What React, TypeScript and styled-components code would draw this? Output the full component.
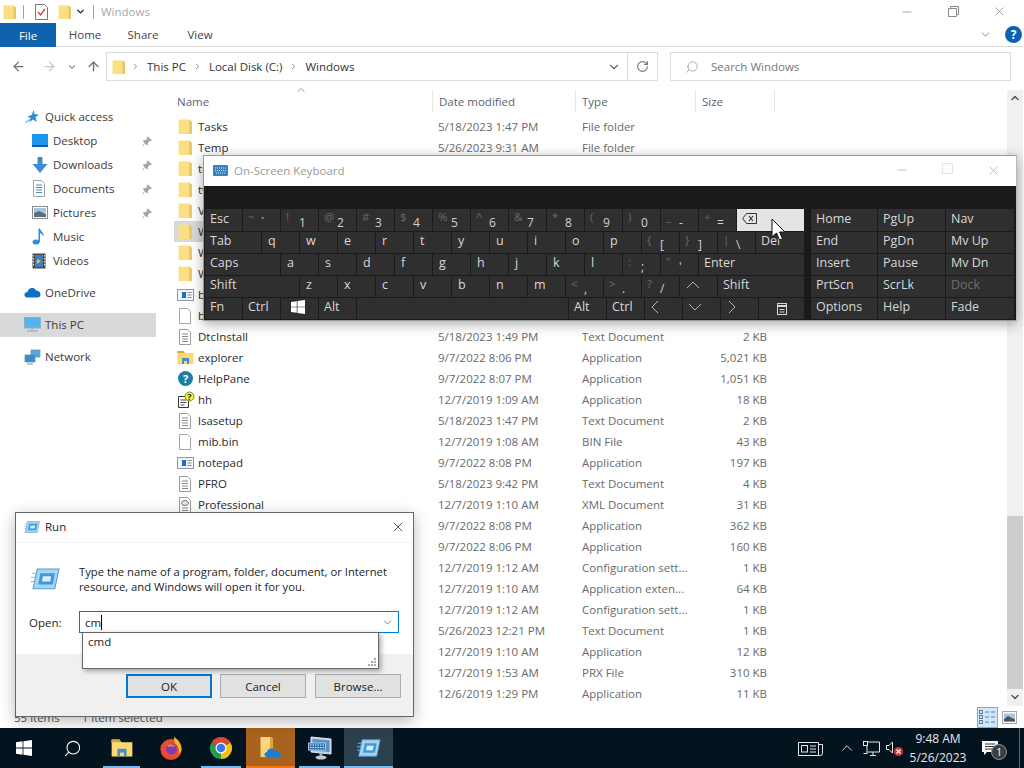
import { ReactNode } from 'react';
import styled, { createGlobalStyle } from 'styled-components';
import { ArrowLeft, ArrowRight, ArrowUp, ChevronDown, ChevronRight, ChevronUp, RotateCw, Search, X, Minus } from 'lucide-react';

const GlobalStyle = createGlobalStyle`
  html, body { margin: 0; padding: 0; background: #fff; overflow: hidden; }
  * { box-sizing: border-box; }
  body { font-family: "Open Sans", "Noto Sans", "Liberation Sans", sans-serif; font-size: 11.5px; color: #333; }
`;

const Desktop = styled.div`
  position: relative;
  width: 1024px;
  height: 768px;
  display: flex;
  flex-direction: column;
  overflow: hidden;
`;

/* ---------- explorer window ---------- */

const Explorer = styled.div`
  flex: 1;
  min-height: 0;
  display: flex;
  flex-direction: column;
  background: #fff;
`;

const TitleBar = styled.div`
  height: 23px;
  display: flex;
  align-items: center;
  padding-left: 2px;
  flex-shrink: 0;
`;

const QuickSep = styled.span<{ $l: number; $r: number }>`
  width: 1px;
  height: 14px;
  background: #a0a0a0;
  margin: 0 ${p => p.$r}px 0 ${p => p.$l}px;
`;

const QuickGap = styled.span`
  width: 9px;
`;

const QuickArrow = styled.span`
  display: flex;
  margin-left: 2px;
  color: #222;
`;

const TitleText = styled.span`
  color: #a8a8a8;
  font-size: 11.5px;
`;

const WinControls = styled.div`
  margin-left: auto;
  display: flex;
  align-items: center;
  padding-right: 2px;
  color: #777;
`;

const WinControl = styled.span<{ $w?: number }>`
  width: ${p => p.$w ?? 46}px;
  display: flex;
  justify-content: center;
`;

const Tabs = styled.div`
  height: 24px;
  display: flex;
  align-items: stretch;
  border-bottom: 1px solid #dadada;
  flex-shrink: 0;
`;

const FileTab = styled.div`
  width: 56px;
  background: #0f62ad;
  color: #fff;
  display: flex;
  align-items: center;
  justify-content: center;
  margin-bottom: -1px;
`;

const Tab = styled.div<{ $w: number }>`
  width: ${p => p.$w}px;
  display: flex;
  align-items: center;
  justify-content: center;
  color: #444;
`;

const HelpArea = styled.div`
  margin-left: auto;
  display: flex;
  align-items: center;
  gap: 13px;
  padding-right: 2px;
  color: #b5b5b5;
`;

const HelpBall = styled.span`
  width: 17px;
  height: 17px;
  border-radius: 50%;
  background: #0a62b0;
  color: #fff;
  font-weight: 700;
  font-size: 12px;
  display: flex;
  align-items: center;
  justify-content: center;
`;

const AddressRow = styled.div`
  height: 43px;
  display: flex;
  align-items: flex-start;
  flex-shrink: 0;
  padding: 5px 13px 0 0;
`;

const NavButtons = styled.div`
  width: 106px;
  height: 29px;
  display: flex;
  align-items: center;
  padding-left: 11px;
`;

const NavBtn = styled.span<{ $w: number; $dim?: boolean }>`
  width: ${p => p.$w}px;
  display: flex;
  color: ${p => (p.$dim ? '#c8c8c8' : '#707070')};
`;

const AddressBox = styled.div`
  width: 552px;
  height: 29px;
  border: 1px solid #dcdcdc;
  display: flex;
  align-items: center;
  padding-left: 4px;
  font-size: 11.5px;
  color: #333;
`;

const Crumb = styled.span`
  margin-left: 7px;
  white-space: nowrap;
`;

const CrumbChevron = styled.span<{ $m?: number }>`
  margin-left: ${p => p.$m ?? 7}px;
  color: #888;
  display: flex;
`;

const AddressEnd = styled.div`
  margin-left: auto;
  display: flex;
  align-items: center;
  height: 100%;
  color: #666;
`;

const RefreshCell = styled.span`
  width: 30px;
  height: 100%;
  border-left: 1px solid #dcdcdc;
  margin-left: 6px;
  display: flex;
  align-items: center;
  justify-content: center;
  color: #777;
`;

const SearchBox = styled.div`
  margin-left: 12px;
  flex: 1;
  height: 29px;
  border: 1px solid #dcdcdc;
  display: flex;
  align-items: center;
  padding-left: 14px;
  gap: 12px;
  color: #777;
  font-size: 11.5px;
`;

const Mirror = styled.span`
  display: flex;
  transform: scaleX(-1);
`;

const Body = styled.div`
  flex: 1;
  min-height: 0;
  display: flex;
`;

const Nav = styled.div`
  width: 156px;
  flex-shrink: 0;
  padding-top: 15px;
  display: flex;
  flex-direction: column;
`;

const NavRow = styled.div<{ $indent: number; $selected?: boolean; $gap?: number }>`
  height: 24px;
  display: flex;
  align-items: center;
  padding: 0 3px 1px ${p => p.$indent}px;
  margin-top: ${p => p.$gap ?? 0}px;
  background: ${p => (p.$selected ? '#d9d9d9' : 'transparent')};
  color: #3a3a3a;
  font-size: 11.5px;
`;

const NavIcon = styled.span`
  width: 21px;
  display: flex;
  flex-shrink: 0;
`;

const NavPin = styled.span`
  margin-left: auto;
  display: flex;
`;

const ListArea = styled.div`
  flex: 1;
  min-width: 0;
  padding-left: 18px;
`;

const HeaderRow = styled.div`
  height: 22px;
  display: flex;
  margin-bottom: 4px;
  position: relative;
`;

const HeaderCell = styled.div<{ $w: number; $first?: boolean }>`
  width: ${p => p.$w}px;
  padding-left: ${p => (p.$first ? 3 : 6)}px;
  border-left: ${p => (p.$first ? 'none' : '1px solid #e5e5e5')};
  display: flex;
  align-items: center;
  color: #5a6470;
  font-size: 11.5px;
  &:last-child {
    border-right: 1px solid #e5e5e5;
  }
`;

const SortCaret = styled.span`
  position: absolute;
  left: 121px;
  top: -6px;
  display: flex;
  color: #777;
`;

const FileRow = styled.div<{ $selected?: boolean }>`
  height: 21px;
  width: 601px;
  display: grid;
  grid-template-columns: 264px 144px 113px 72px;
  align-items: center;
  background: ${p => (p.$selected ? '#d9d9d9' : 'transparent')};
  color: #6a6a6a;
  font-size: 11.5px;
  white-space: nowrap;
`;

const NameCell = styled.div`
  display: flex;
  align-items: center;
  padding-left: 3px;
  color: #2b2b2b;
`;

const NameIcon = styled.span`
  width: 21px;
  height: 18px;
  display: flex;
  align-items: center;
  flex-shrink: 0;
`;

const SizeCell = styled.div`
  text-align: right;
`;

const Scrollbar = styled.div`
  width: 16px;
  margin-right: 1px;
  background: #f0f0f0;
  display: flex;
  flex-direction: column;
  flex-shrink: 0;
`;

const ScrollArrow = styled.div`
  height: 16px;
  display: flex;
  align-items: center;
  justify-content: center;
  color: #555;
`;

const ScrollSpace = styled.div`
  height: 410px;
`;

const ScrollThumb = styled.div`
  height: 173px;
  background: #cdcdcd;
`;

const StatusBar = styled.div`
  height: 22px;
  display: flex;
  align-items: center;
  flex-shrink: 0;
  padding-left: 14px;
  color: #555;
`;

const StatusGap = styled.span`
  margin-left: 22px;
`;

const ViewIcons = styled.div`
  margin-left: auto;
  display: flex;
  align-items: center;
  padding-right: 7px;
  gap: 4px;
`;

const ViewBtn = styled.span<{ $active?: boolean; $w: number }>`
  width: ${p => p.$w}px;
  height: 21px;
  display: flex;
  align-items: center;
  justify-content: center;
  background: ${p => (p.$active ? '#cce8ff' : 'transparent')};
  border: ${p => (p.$active ? '1px solid #6bb6e0' : 'none')};
`;

/* ---------- on-screen keyboard ---------- */

const OskWindow = styled.div`
  position: absolute;
  left: 203px;
  top: 155px;
  width: 814px;
  height: 166px;
  border: 1px solid #9a9a9a;
  border-right-color: #bbb;
  background: #1a1a1a;
  box-shadow: 0 3px 12px rgba(0, 0, 0, 0.35);
  display: flex;
  flex-direction: column;
`;

const OskTitle = styled.div`
  height: 30px;
  background: #fff;
  display: flex;
  align-items: center;
  padding: 0 0 1px 9px;
  gap: 6px;
  font-size: 11.5px;
  color: #9a9a9a;
  flex-shrink: 0;
`;

const OskControls = styled.div`
  margin-left: auto;
  display: flex;
  color: #9a9a9a;
`;

const OskDisplay = styled.div`
  height: 23px;
  background: #1a1a1a;
  flex-shrink: 0;
`;

const KeyArea = styled.div`
  display: flex;
  padding-left: 1px;
`;

const MainKeys = styled.div`
  width: 606px;
  display: flex;
  flex-direction: column;
  gap: 1px;
`;

const NavKeys = styled.div`
  flex: 1;
  display: flex;
  flex-direction: column;
  gap: 1px;
`;

const KeyRow = styled.div`
  height: 21px;
  display: flex;
  gap: 1px;
  &:first-child {
    height: 22px;
  }
`;

const Key = styled.div<{ $w: number; $hot?: boolean; $dim?: boolean; $center?: boolean; $pad?: number }>`
  width: ${p => p.$w - 1}px;
  flex-shrink: 0;
  background: ${p => (p.$hot ? '#e4e4e4' : '#2f2f2f')};
  color: ${p => (p.$dim ? '#6e6e6e' : '#d8d8d8')};
  font-size: 12.5px;
  display: flex;
  align-items: center;
  justify-content: ${p => (p.$center ? 'center' : 'flex-start')};
  padding: ${p => (p.$center ? '0' : `0 0 4px ${p.$pad ?? 5}px`)};
  white-space: nowrap;
  overflow: hidden;
`;

const LetterLabel = styled.span`
  margin-left: 1px;
  font-size: 12.5px;
`;

const SymLabel = styled.span`
  align-self: flex-start;
  color: #6a6a6a;
  font-size: 11.5px;
  line-height: 15px;
  width: 11px;
  flex-shrink: 0;
`;

const DigitLabel = styled.span`
  align-self: flex-end;
  margin-left: 2px;
  margin-bottom: -3px;
  font-size: 12px;
  line-height: 15px;
  color: #cfcfcf;
`;

const PointerArrow = styled.svg`
  position: absolute;
  left: 771px;
  top: 218px;
`;

/* ---------- run dialog ---------- */

const RunWindow = styled.div`
  position: absolute;
  left: 15px;
  top: 512px;
  width: 399px;
  height: 205px;
  background: #fff;
  border: 1px solid #666;
  box-shadow: 0 4px 14px rgba(0, 0, 0, 0.28);
  display: flex;
  flex-direction: column;
  color: #222;
  font-size: 11.5px;
`;

const RunTitle = styled.div`
  height: 30px;
  display: flex;
  align-items: center;
  padding: 0 0 2px 8px;
  gap: 5px;
  border-bottom: 1px solid #f2f2f2;
  flex-shrink: 0;
`;

const RunClose = styled.span`
  margin-left: auto;
  padding-right: 7px;
  display: flex;
  color: #333;
`;

const RunBody = styled.div`
  flex: 1;
  position: relative;
  display: flex;
  flex-direction: column;
  padding: 21px 14px 0 13px;
`;

const RunMessage = styled.div`
  display: flex;
  align-items: center;
  gap: 19px;
  padding-left: 2px;
`;

const RunText = styled.div`
  line-height: 15px;
  white-space: nowrap;
  font-size: 11.25px;
`;

const OpenRow = styled.div`
  display: flex;
  align-items: center;
  margin-top: 17px;
`;

const OpenLabel = styled.span`
  width: 50px;
`;

const Combo = styled.div`
  width: 320px;
  height: 22px;
  border: 1px solid #0078d7;
  display: flex;
  align-items: center;
  padding-left: 5px;
  margin-right: -1px;
`;

const Caret = styled.span`
  width: 1px;
  height: 15px;
  background: #000;
`;

const ComboArrow = styled.span`
  margin-left: auto;
  padding-right: 1px;
  display: flex;
  color: #555;
  width: 20px;
  justify-content: center;
`;

const Suggest = styled.div`
  position: absolute;
  left: 66px;
  top: 89px;
  width: 297px;
  height: 37px;
  background: #fff;
  border: 1px solid #666;
  box-shadow: 2px 2px 5px rgba(0, 0, 0, 0.35);
  padding: 1px 0 0 5px;
  z-index: 2;
`;

const Grip = styled.svg`
  position: absolute;
  right: 1px;
  bottom: 1px;
`;

const RunFooter = styled.div`
  height: 62px;
  background: #f0f0f0;
  display: flex;
  align-items: flex-start;
  padding: 20px 0 0 110px;
  flex-shrink: 0;
`;

const DialogButton = styled.div<{ $primary?: boolean; $w: number; $gap?: number }>`
  width: ${p => p.$w}px;
  height: 24px;
  margin-right: ${p => p.$gap ?? 0}px;
  background: #e1e1e1;
  border: ${p => (p.$primary ? '2px solid #0078d7' : '1px solid #adadad')};
  display: flex;
  align-items: center;
  justify-content: center;
`;

/* ---------- taskbar ---------- */

const Taskbar = styled.div`
  height: 40px;
  background: #04141f;
  display: flex;
  align-items: stretch;
  flex-shrink: 0;
`;

const TaskBtn = styled.div<{ $w?: number; $bg?: string; $line?: string; $lineInset?: number }>`
  position: relative;
  width: ${p => p.$w ?? 49}px;
  display: flex;
  align-items: center;
  justify-content: center;
  background: ${p => p.$bg ?? 'transparent'};
  &::after {
    content: '';
    display: ${p => (p.$line ? 'block' : 'none')};
    position: absolute;
    left: ${p => p.$lineInset ?? 0}px;
    right: ${p => p.$lineInset ?? 0}px;
    bottom: 0;
    height: 2px;
    background: ${p => p.$line};
  }
`;

const Tray = styled.div`
  margin-left: auto;
  display: flex;
  align-items: stretch;
  color: #fff;
`;

const TraySlot = styled.div<{ $w: number; $gap?: number }>`
  position: relative;
  width: ${p => p.$w}px;
  margin-left: ${p => p.$gap ?? 0}px;
  display: flex;
  align-items: center;
  justify-content: center;
`;

const Clock = styled.div`
  display: flex;
  flex-direction: column;
  align-items: center;
  color: #e8e8e8;
  font-size: 12px;
  line-height: 19px;
  white-space: nowrap;
`;

const NotifBadge = styled.span`
  position: absolute;
  left: 22px;
  top: 16px;
  width: 16px;
  height: 16px;
  border-radius: 50%;
  background: #3a3f44;
  border: 1px solid #8a8f94;
  color: #fff;
  font-size: 10px;
  display: flex;
  align-items: center;
  justify-content: center;
`;

const DesktopPeek = styled.div`
  width: 13px;
  display: flex;
  justify-content: flex-end;
  padding-right: 4px;
`;

const PeekLine = styled.span`
  width: 1px;
  background: #5a6670;
`;

/* ---------- drawings ---------- */

function Folder({ size = 16 }: { size?: number }) {
  return (
    <svg width={size} height={size} viewBox="0 0 16 16">
      <path d="M1.500 1.500h10l2.500 2v11.500h-12.500z" fill="#fcdf85" />
      <path d="M11.500 1.500l2.500 2v11.500h-2.500z" fill="#e9c566" />
    </svg>
  );
}

function TextDoc() {
  return (
    <svg width="16" height="18" viewBox="0 0 16 18">
      <path d="M2.500 1.500h8l3 3v12h-11z" fill="#fff" stroke="#9a9a9a" />
      <path d="M5 6h6M5 8.500h6M5 11h6M5 13.500h6" stroke="#8a8a8a" />
    </svg>
  );
}

function BlankDoc() {
  return (
    <svg width="16" height="18" viewBox="0 0 16 18">
      <path d="M2.500 1.500h8l3 3v12h-11z" fill="#fff" stroke="#a5a5a5" />
    </svg>
  );
}

function NotepadApp() {
  return (
    <svg width="17" height="14" viewBox="0 0 17 14">
      <rect x="0.500" y="1.500" width="16" height="11" fill="#f4f8fc" stroke="#8a9aaa" />
      <rect x="5" y="4" width="4" height="6" fill="#1f6fc0" />
      <path d="M10.500 4.500h4M10.500 7h4M10.500 9.500h4" stroke="#7a8a9a" />
    </svg>
  );
}

function ExplorerIcon({ size = 17 }: { size?: number }) {
  return (
    <svg width={size} height={size} viewBox="0 0 17 17">
      <path d="M0.500 2h6l1.500 2h8.500v11h-16z" fill="#fcd874" />
      <path d="M0.500 2h6l1 2h-7.500z" fill="#d9a531" />
      <path d="M5 9h7v6h-2v-3h-3v3h-2z" fill="#4a8cc4" />
    </svg>
  );
}

function HelpIcon() {
  return (
    <svg width="17" height="17" viewBox="0 0 17 17">
      <circle cx="8.500" cy="8.500" r="7.500" fill="#1b7f9f" />
      <text x="8.500" y="12.500" textAnchor="middle" fontSize="11" fontWeight="700" fill="#fff" fontFamily="Open Sans, sans-serif">?</text>
    </svg>
  );
}

function HhIcon() {
  return (
    <svg width="19" height="18" viewBox="0 0 19 18">
      <path d="M1.500 5.500h10v11h-10z" fill="#fff" stroke="#333" />
      <path d="M3.500 9h6M3.500 11.500h6M3.500 14h4" stroke="#444" />
      <circle cx="12.500" cy="5.500" r="4.500" fill="#f4ee3c" stroke="#8a8a20" />
      <text x="12.500" y="9" textAnchor="middle" fontSize="9" fontWeight="700" fill="#333" fontFamily="Open Sans, sans-serif">?</text>
    </svg>
  );
}

function XmlDoc() {
  return (
    <svg width="16" height="18" viewBox="0 0 16 18">
      <path d="M2.500 1.500h8l3 3v12h-11z" fill="#fff" stroke="#9a9a9a" />
      <ellipse cx="8" cy="7" rx="3.500" ry="2.500" fill="#e8e8e8" stroke="#777" />
      <path d="M5 12h6M5 14.500h6" stroke="#8a8a8a" />
    </svg>
  );
}

function RowIcon({ kind }: { kind: string }) {
  if (kind === 'folder') return <Folder size={17} />;
  if (kind === 'text') return <TextDoc />;
  if (kind === 'blank') return <BlankDoc />;
  if (kind === 'note') return <NotepadApp />;
  if (kind === 'explorer') return <ExplorerIcon />;
  if (kind === 'help') return <HelpIcon />;
  if (kind === 'hh') return <HhIcon />;
  if (kind === 'xml') return <XmlDoc />;
  return null;
}

function PinIcon() {
  return (
    <svg width="12" height="12" viewBox="0 0 12 12">
      <path d="M6.500 1l4.500 4.500-1.200.6-.8-.3-2 2 .2 1.700-1 1-2-2-3 3-.4-.4 3-3-2-2 1-1 1.700.2 2-2-.3-.8z" fill="#a0a4a8" />
    </svg>
  );
}

function StarIcon() {
  return (
    <svg width="16" height="16" viewBox="0 0 16 16">
      <path d="M9.500 1l1.200 4.300 4.300.3-3.500 2.700 1.200 4.700-3.800-2.600-3.800 3 1.400-4.600-3.200-1 4.600-2z" fill="#2b8fd8" />
      <path d="M1 13l4-3 1 1-4 3.500z" fill="#8fc4ea" />
    </svg>
  );
}

function DesktopIcon() {
  return (
    <svg width="16" height="13" viewBox="0 0 16 13">
      <rect x="0" y="0" width="16" height="13" fill="#1a98ee" />
      <rect x="0" y="11" width="16" height="2" fill="#0b5fa8" />
    </svg>
  );
}

function DownloadsIcon() {
  return (
    <svg width="16" height="16" viewBox="0 0 16 16">
      <path d="M5.500 0h5v7h5L8 16 0.500 7h5z" fill="#3d8bd0" />
    </svg>
  );
}

function DocumentsIcon() {
  return (
    <svg width="14" height="17" viewBox="0 0 14 17">
      <path d="M1.500 0.500h8l3 3v13h-11z" fill="#fff" stroke="#9aa5ae" />
      <path d="M4 5h6M4 7.500h6M4 10h6M4 12.500h6" stroke="#4f8cb8" />
    </svg>
  );
}

function PicturesIcon() {
  return (
    <svg width="16" height="13" viewBox="0 0 16 13">
      <rect x="0.500" y="0.500" width="15" height="12" fill="#fff" stroke="#8a8a8a" />
      <rect x="2" y="2" width="12" height="5" fill="#a9c4dc" />
      <path d="M2 7l5-2 7 3v3h-12z" fill="#5a6f80" />
    </svg>
  );
}

function MusicIcon() {
  return (
    <svg width="14" height="17" viewBox="0 0 14 17">
      <ellipse cx="4" cy="14" rx="3.500" ry="2.500" fill="#2b8fd8" />
      <path d="M6.500 14V0.500h1.500c.5 3 4.500 4 3.500 8-.5-2-2.500-3-3.500-3.500V14z" fill="#2b8fd8" />
    </svg>
  );
}

function VideosIcon() {
  return (
    <svg width="14" height="16" viewBox="0 0 14 16">
      <rect x="0.500" y="0.500" width="13" height="15" fill="#4a4a4a" />
      <rect x="3" y="2" width="8" height="12" fill="#3d7fb8" />
      <path d="M5 6l4 2-4 3z" fill="#e8c24a" />
      <path d="M1.500 2v12M12.500 2v12" stroke="#ddd" strokeDasharray="1.500 1.500" />
    </svg>
  );
}

function OneDriveIcon() {
  return (
    <svg width="17" height="11" viewBox="0 0 17 11">
      <path d="M3.500 10.500C1 10.500 0 8.500 0.500 7 1 5.500 2.500 5 3.500 5 4 2 6.500 0.500 9 1c1.500.3 2.500 1.300 3 2.500 2.500 0 4.500 1.500 4.500 4 0 1.800-1.300 3-3 3z" fill="#0f6fc6" />
    </svg>
  );
}

function MonitorIcon() {
  return (
    <svg width="17" height="16" viewBox="0 0 17 16">
      <rect x="0.500" y="0.500" width="16" height="10.500" fill="#52b4ec" stroke="#8ab2cc" />
      <path d="M8 11v2.500M3 14h11" stroke="#a5b5c0" strokeWidth="1.500" />
    </svg>
  );
}

function NetworkIcon() {
  return (
    <svg width="17" height="16" viewBox="0 0 17 16">
      <rect x="7" y="1" width="9" height="7" fill="#52a8e0" stroke="#6a8aa0" strokeWidth="0.700" />
      <rect x="1" y="6" width="10" height="7" fill="#3a8fd0" stroke="#6a8aa0" strokeWidth="0.700" />
      <path d="M3 15h6" stroke="#7a8a9a" />
    </svg>
  );
}

function WinLogo({ size = 16, color = '#fff' }: { size?: number; color?: string }) {
  return (
    <svg width={size} height={size} viewBox="0 0 16 16">
      <path d="M0 2.200l6.600-.9v6.300H0zM7.400 1.200L16 0v7.600H7.400zM0 8.400h6.600v6.300L0 13.800zM7.400 8.400H16V16l-8.600-1.200z" fill={color} />
    </svg>
  );
}

function RunIcon({ size = 18 }: { size?: number }) {
  return (
    <svg width={size} height={size * 0.75} viewBox="0 0 28 21">
      <path d="M6 1h21l-4 19H2z" fill="#a8d4f0" stroke="#4f9fd8" />
      <path d="M9 5h14l-2 11H7z" fill="#3f9ad8" />
      <path d="M11.500 8h8l-1 5h-8z" fill="#d8eefa" />
      <path d="M1 5h4M0 9h4M0 13h3" stroke="#7fbde6" />
    </svg>
  );
}

function KeyboardMini() {
  return (
    <svg width="15" height="11" viewBox="0 0 15 11">
      <rect width="15" height="11" rx="1" fill="#3a7fc0" />
      <path d="M2 3h11M2 5.500h11M3 8h9" stroke="#cfe6f7" strokeDasharray="1 1" />
    </svg>
  );
}

function FirefoxIcon() {
  return (
    <svg width="24" height="24" viewBox="0 0 24 24">
      <circle cx="12" cy="13.500" r="10.500" fill="#e8502a" />
      <path d="M15 1c5 3 8 8 7.500 13-.5 2-1.500 3-3 4 1-4 0-8-3-10-1-3-2-5-1.500-7z" fill="#fbb323" />
      <path d="M2 9c-1.500 5 1 12 9 13.500 4 .5 7-1 8-3-5 2-12 0-13-5-.5-2 0-4 1-5z" fill="#f0433c" />
      <circle cx="12.500" cy="13" r="5.500" fill="#7a3fb0" />
      <path d="M8 9c3-1.500 7-1 8.500 2-2-1-5-1-7 0z" fill="#f78a2a" />
    </svg>
  );
}

function ChromeIcon() {
  return (
    <svg width="24" height="24" viewBox="0 0 24 24">
      <path d="M12 12L2.470 6.500A11 11 0 0 1 21.530 6.500z" fill="#dd4535" />
      <path d="M12 12l9.530-5.500A11 11 0 0 1 12 23z" fill="#f4c20d" />
      <path d="M12 12v11A11 11 0 0 1 2.470 6.500z" fill="#1f9d55" />
      <circle cx="12" cy="12" r="5.500" fill="#fff" />
      <circle cx="12" cy="12" r="4.300" fill="#3b78e7" />
    </svg>
  );
}

function OneDriveFolderIcon() {
  return (
    <svg width="22" height="24" viewBox="0 0 22 24">
      <path d="M0.500 1h11l1.500 2v18H0.500z" fill="#f7d57e" />
      <path d="M10 1h1.500l1.500 2v18h-3z" fill="#d9a93f" />
      <path d="M7.500 21c-2 0-3-1.200-3-2.500S5.500 16 7 16c.5-2.500 2.500-4 5-3.500 1.500.3 2.500 1.200 3 2.500 3-.5 6 1.500 6 6z" fill="#1b7fd0" />
    </svg>
  );
}

function OskTaskIcon() {
  return (
    <svg width="24" height="24" viewBox="0 0 24 24">
      <path d="M3 1l20 2v15L3 16z" fill="#b8cfe6" stroke="#dce8f2" />
      <path d="M4.500 3l17 1.500v11.500l-17-1.500z" fill="#5f8fc0" />
      <rect x="0.500" y="7" width="17" height="7" fill="#2f6fae" stroke="#c9ddee" strokeWidth="0.800" />
      <path d="M2 9h14M2 11.500h14" stroke="#e4eef7" strokeDasharray="1.500 1" />
      <ellipse cx="13" cy="21.500" rx="5.500" ry="2" fill="#c8c8c8" />
      <rect x="11.500" y="17" width="3" height="3" fill="#aaa" />
    </svg>
  );
}

function NewsIcon() {
  return (
    <svg width="25" height="16" viewBox="0 0 25 16" fill="none" stroke="#e8e8e8">
      <path d="M0.500 2.500h20v13h-20zM20.500 4.500h4v9a2 2 0 0 1-2 2h-2" />
      <rect x="3.500" y="5.500" width="6" height="6.500" />
      <path d="M12 6h6M12 9h6M12 12h6" />
    </svg>
  );
}

function NetTrayIcon() {
  return (
    <svg width="17" height="15" viewBox="0 0 17 15" fill="none" stroke="#e8e8e8">
      <path d="M4.500 1h12v10h-12M10 11v3M7 14.500h6M4 5v7" />
      <rect x="0.500" y="0.500" width="4" height="4" />
      <path d="M0.500 12.500h4" />
    </svg>
  );
}

function SoundIcon() {
  return (
    <svg width="18" height="18" viewBox="0 0 18 18">
      <path d="M0.500 6.500h2.500l3.500-3.500v11l-3.500-3.500h-2.500z" fill="none" stroke="#e8e8e8" />
      <circle cx="12.500" cy="12.500" r="4.500" fill="#d13438" />
      <path d="M10.500 10.500l4 4M14.500 10.500l-4 4" stroke="#fff" strokeWidth="1.200" />
    </svg>
  );
}

function NotifIcon() {
  return (
    <svg width="16" height="15" viewBox="0 0 16 15">
      <path d="M0 0h16v11H5l-3 3v-3H0z" fill="#fff" />
      <path d="M3 3h10M3 5.500h10M3 8h7" stroke="#333" />
    </svg>
  );
}

function DetailsViewIcon() {
  return (
    <svg width="17" height="15" viewBox="0 0 17 15" fill="none" stroke="#6e7a86">
      <rect x="0.500" y="0.500" width="3" height="3" />
      <rect x="0.500" y="5.500" width="3" height="3" />
      <rect x="0.500" y="10.500" width="3" height="3" />
      <path d="M6 2h4M12 2h4M6 7h4M12 7h4M6 12h4M12 12h4" />
    </svg>
  );
}

function LargeViewIcon() {
  return (
    <svg width="15" height="13" viewBox="0 0 15 13">
      <rect x="0.500" y="0.500" width="14" height="12" fill="#fff" stroke="#a8a8a8" />
      <rect x="2" y="2.500" width="11" height="8" fill="#a9c4dc" />
      <path d="M2 8l4-3 7 3.500v2h-11z" fill="#40566a" />
    </svg>
  );
}

function PropertiesIcon() {
  return (
    <svg width="13" height="16" viewBox="0 0 13 16">
      <path d="M0.500 0.500h9l3 3v12h-12z" fill="#fff" stroke="#777" />
      <path d="M3 8l2.500 3L10 5" fill="none" stroke="#d83a3a" strokeWidth="1.300" />
    </svg>
  );
}

function BackspaceGlyph() {
  return (
    <svg width="15" height="11" viewBox="0 0 15 11" fill="none" stroke="#333">
      <path d="M4.500 0.500h10v10h-10L0.700 5.500z" />
      <path d="M7 3l4 5M11 3l-4 5" strokeWidth="1.200" />
    </svg>
  );
}

function ArrowGlyph({ d, w, h }: { d: string; w: number; h: number }) {
  return (
    <svg width={w} height={h} viewBox={`0 0 ${w} ${h}`} fill="none" stroke="#b5b5b5">
      <path d={d} />
    </svg>
  );
}

function MenuGlyph() {
  return (
    <svg width="10" height="12" viewBox="0 0 10 12" fill="none" stroke="#d8d8d8">
      <rect x="0.500" y="0.500" width="9" height="11" />
      <path d="M0.500 3h9" strokeWidth="2" />
      <path d="M2.500 6.500h5M2.500 9h5" />
    </svg>
  );
}

/* ---------- data ---------- */

type FileEntry = { name: string; icon: string; date: string; type: string; size: string; selected?: boolean };

const files: FileEntry[] = [
  { name: 'Tasks', icon: 'folder', date: '5/18/2023 1:47 PM', type: 'File folder', size: '' },
  { name: 'Temp', icon: 'folder', date: '5/26/2023 9:31 AM', type: 'File folder', size: '' },
  { name: 'tracing', icon: 'folder', date: '12/7/2019 1:14 AM', type: 'File folder', size: '' },
  { name: 'twain_32', icon: 'folder', date: '12/7/2019 1:31 AM', type: 'File folder', size: '' },
  { name: 'Vss', icon: 'folder', date: '12/7/2019 1:14 AM', type: 'File folder', size: '' },
  { name: 'WaaS', icon: 'folder', date: '12/7/2019 1:14 AM', type: 'File folder', size: '', selected: true },
  { name: 'Web', icon: 'folder', date: '12/7/2019 1:31 AM', type: 'File folder', size: '' },
  { name: 'WinSxS', icon: 'folder', date: '5/18/2023 1:50 PM', type: 'File folder', size: '' },
  { name: 'bfsvc', icon: 'note', date: '12/7/2019 1:09 AM', type: 'Application', size: '78 KB' },
  { name: 'bootstat.dat', icon: 'blank', date: '5/26/2023 9:30 AM', type: 'DAT File', size: '66 KB' },
  { name: 'DtcInstall', icon: 'text', date: '5/18/2023 1:49 PM', type: 'Text Document', size: '2 KB' },
  { name: 'explorer', icon: 'explorer', date: '9/7/2022 8:06 PM', type: 'Application', size: '5,021 KB' },
  { name: 'HelpPane', icon: 'help', date: '9/7/2022 8:07 PM', type: 'Application', size: '1,051 KB' },
  { name: 'hh', icon: 'hh', date: '12/7/2019 1:09 AM', type: 'Application', size: '18 KB' },
  { name: 'lsasetup', icon: 'text', date: '5/18/2023 1:47 PM', type: 'Text Document', size: '2 KB' },
  { name: 'mib.bin', icon: 'blank', date: '12/7/2019 1:08 AM', type: 'BIN File', size: '43 KB' },
  { name: 'notepad', icon: 'note', date: '9/7/2022 8:08 PM', type: 'Application', size: '197 KB' },
  { name: 'PFRO', icon: 'text', date: '5/18/2023 9:42 PM', type: 'Text Document', size: '4 KB' },
  { name: 'Professional', icon: 'xml', date: '12/7/2019 1:10 AM', type: 'XML Document', size: '31 KB' },
  { name: 'regedit', icon: 'note', date: '9/7/2022 8:08 PM', type: 'Application', size: '362 KB' },
  { name: 'splwow64', icon: 'note', date: '9/7/2022 8:06 PM', type: 'Application', size: '160 KB' },
  { name: 'system', icon: 'text', date: '12/7/2019 1:12 AM', type: 'Configuration sett...', size: '1 KB' },
  { name: 'twain_32.dll', icon: 'blank', date: '12/7/2019 1:10 AM', type: 'Application exten...', size: '64 KB' },
  { name: 'win', icon: 'text', date: '12/7/2019 1:12 AM', type: 'Configuration sett...', size: '1 KB' },
  { name: 'WindowsUpdate', icon: 'text', date: '5/26/2023 12:21 PM', type: 'Text Document', size: '1 KB' },
  { name: 'winhlp32', icon: 'note', date: '12/7/2019 1:10 AM', type: 'Application', size: '12 KB' },
  { name: 'WMSysPr9.prx', icon: 'blank', date: '12/7/2019 1:53 AM', type: 'PRX File', size: '310 KB' },
  { name: 'write', icon: 'note', date: '12/6/2019 1:29 PM', type: 'Application', size: '11 KB' },
];

type KeySpec = { w: number; label?: string; sym?: string; digit?: string; letter?: boolean; glyph?: ReactNode; hot?: boolean; center?: boolean; pad?: number };

const letters = (s: string): KeySpec[] => s.split('').map(c => ({ w: 38, label: c, letter: true }));
const shifted = (pairs: string[][]): KeySpec[] => pairs.map(([sym, digit]) => ({ w: 38, sym, digit }));

const keyRows: KeySpec[][] = [
  [
    { w: 38, label: 'Esc' },
    ...shifted([['~', '`'], ['!', '1'], ['@', '2'], ['#', '3'], ['$', '4'], ['%', '5'], ['^', '6'], ['&', '7'], ['*', '8'], ['(', '9'], [')', '0'], ['_', '-'], ['+', '=']]),
    { w: 68, glyph: <BackspaceGlyph />, hot: true },
  ],
  [
    { w: 57, label: 'Tab' },
    ...letters('qwertyuiop'),
    ...shifted([['{', '['], ['}', ']'], ['|', '\\']]),
    { w: 49, label: 'Del' },
  ],
  [
    { w: 76, label: 'Caps' },
    ...letters('asdfghjkl'),
    ...shifted([[':', ';'], ['"', "'"]]),
    { w: 106, label: 'Enter' },
  ],
  [
    { w: 95, label: 'Shift' },
    ...letters('zxcvbnm'),
    ...shifted([['<', ','], ['>', '.'], ['?', '/']]),
    { w: 38, pad: 6, glyph: <ArrowGlyph w={14} h={8} d="M1 7l6-6 6 6" /> },
    { w: 87, label: 'Shift' },
  ],
  [
    { w: 38, label: 'Fn' },
    { w: 38, label: 'Ctrl' },
    { w: 38, pad: 10, glyph: <WinLogo size={14} /> },
    { w: 38, label: 'Alt' },
    { w: 212 },
    { w: 38, label: 'Alt' },
    { w: 38, label: 'Ctrl' },
    { w: 38, pad: 6, glyph: <ArrowGlyph w={8} h={14} d="M7 1L1 7l6 6" /> },
    { w: 38, pad: 5, glyph: <ArrowGlyph w={14} h={8} d="M1 1l6 6 6-6" /> },
    { w: 38, pad: 7, glyph: <ArrowGlyph w={8} h={14} d="M1 1l6 6-6 6" /> },
    { w: 46, center: true, glyph: <MenuGlyph /> },
  ],
];

const navKeyRows = [
  ['Home', 'PgUp', 'Nav'],
  ['End', 'PgDn', 'Mv Up'],
  ['Insert', 'Pause', 'Mv Dn'],
  ['PrtScn', 'ScrLk', 'Dock'],
  ['Options', 'Help', 'Fade'],
];

const navWidths = [67, 68, 69];

function KeyCap({ spec }: { spec: KeySpec }) {
  return (
    <Key $w={spec.w} $hot={spec.hot} $center={spec.center} $pad={spec.pad}>
      {spec.sym && <SymLabel>{spec.sym}</SymLabel>}
      {spec.digit && <DigitLabel>{spec.digit}</DigitLabel>}
      {spec.glyph}
      {spec.label && (spec.letter ? <LetterLabel>{spec.label}</LetterLabel> : spec.label)}
    </Key>
  );
}

export default function App() {
  return (
    <Desktop>
      <GlobalStyle />
      <Explorer>
        <TitleBar>
          <Folder />
          <QuickSep $l={5} $r={11} />
          <PropertiesIcon />
          <QuickGap />
          <Folder />
          <QuickArrow><ChevronDown size={11} strokeWidth={3} /></QuickArrow>
          <QuickSep $l={7} $r={7} />
          <TitleText>Windows</TitleText>
          <WinControls>
            <WinControl><Minus size={14} strokeWidth={1} /></WinControl>
            <WinControl>
              <svg width="11" height="11" viewBox="0 0 11 11" fill="none" stroke="#888">
                <path d="M0.500 2.500h8v8h-8zM2.500 2.500v-2h8v8h-2" />
              </svg>
            </WinControl>
            <WinControl><X size={15} strokeWidth={1} /></WinControl>
          </WinControls>
        </TitleBar>
        <Tabs>
          <FileTab>File</FileTab>
          <Tab $w={58}>Home</Tab>
          <Tab $w={58}>Share</Tab>
          <Tab $w={56}>View</Tab>
          <HelpArea>
            <ChevronDown size={13} strokeWidth={2} />
            <HelpBall>?</HelpBall>
          </HelpArea>
        </Tabs>
        <AddressRow>
          <NavButtons>
            <NavBtn $w={31}><ArrowLeft size={15} strokeWidth={2} /></NavBtn>
            <NavBtn $w={25} $dim><ArrowRight size={15} strokeWidth={2} /></NavBtn>
            <NavBtn $w={19}><ChevronDown size={10} strokeWidth={3} color="#999" /></NavBtn>
            <NavBtn $w={15}><ArrowUp size={15} strokeWidth={2.2} /></NavBtn>
          </NavButtons>
          <AddressBox>
            <Folder />
            <CrumbChevron $m={4}><ChevronRight size={9} strokeWidth={2.5} /></CrumbChevron>
            <Crumb>This PC</Crumb>
            <CrumbChevron><ChevronRight size={9} strokeWidth={2.5} /></CrumbChevron>
            <Crumb>Local Disk (C:)</Crumb>
            <CrumbChevron><ChevronRight size={9} strokeWidth={2.5} /></CrumbChevron>
            <Crumb>Windows</Crumb>
            <AddressEnd>
              <ChevronDown size={14} strokeWidth={2} />
              <RefreshCell><RotateCw size={13} strokeWidth={2} /></RefreshCell>
            </AddressEnd>
          </AddressBox>
          <SearchBox>
            <Mirror><Search size={14} strokeWidth={1} /></Mirror>
            Search Windows
          </SearchBox>
        </AddressRow>
        <Body>
          <Nav>
            <NavRow $indent={24}><NavIcon><StarIcon /></NavIcon>Quick access</NavRow>
            <NavRow $indent={32}><NavIcon><DesktopIcon /></NavIcon>Desktop<NavPin><PinIcon /></NavPin></NavRow>
            <NavRow $indent={32}><NavIcon><DownloadsIcon /></NavIcon>Downloads<NavPin><PinIcon /></NavPin></NavRow>
            <NavRow $indent={32}><NavIcon><DocumentsIcon /></NavIcon>Documents<NavPin><PinIcon /></NavPin></NavRow>
            <NavRow $indent={32}><NavIcon><PicturesIcon /></NavIcon>Pictures<NavPin><PinIcon /></NavPin></NavRow>
            <NavRow $indent={32}><NavIcon><MusicIcon /></NavIcon>Music</NavRow>
            <NavRow $indent={32}><NavIcon><VideosIcon /></NavIcon>Videos</NavRow>
            <NavRow $indent={24} $gap={8}><NavIcon><OneDriveIcon /></NavIcon>OneDrive</NavRow>
            <NavRow $indent={24} $gap={8} $selected><NavIcon><MonitorIcon /></NavIcon>This PC</NavRow>
            <NavRow $indent={24} $gap={8}><NavIcon><NetworkIcon /></NavIcon>Network</NavRow>
          </Nav>
          <ListArea>
            <HeaderRow>
              <SortCaret><ChevronUp size={12} strokeWidth={1.5} /></SortCaret>
              <HeaderCell $w={258} $first>Name</HeaderCell>
              <HeaderCell $w={143}>Date modified</HeaderCell>
              <HeaderCell $w={120}>Type</HeaderCell>
              <HeaderCell $w={80}>Size</HeaderCell>
            </HeaderRow>
            {files.map(f => (
              <FileRow key={f.name} $selected={f.selected}>
                <NameCell>
                  <NameIcon><RowIcon kind={f.icon} /></NameIcon>
                  {f.name}
                </NameCell>
                <div>{f.date}</div>
                <div>{f.type}</div>
                <SizeCell>{f.size}</SizeCell>
              </FileRow>
            ))}
          </ListArea>
          <Scrollbar>
            <ScrollArrow><ChevronUp size={12} strokeWidth={3} /></ScrollArrow>
            <ScrollSpace />
            <ScrollThumb />
            <ScrollArrow><ChevronDown size={12} strokeWidth={3} /></ScrollArrow>
          </Scrollbar>
        </Body>
        <StatusBar>
          55 items
          <StatusGap>1 item selected</StatusGap>
          <ViewIcons>
            <ViewBtn $active $w={21}><DetailsViewIcon /></ViewBtn>
            <ViewBtn $w={15}><LargeViewIcon /></ViewBtn>
          </ViewIcons>
        </StatusBar>
      </Explorer>

      <Taskbar>
        <TaskBtn $w={48}><WinLogo /></TaskBtn>
        <TaskBtn $w={49}><Mirror><Search size={19} strokeWidth={1.3} color="#fff" /></Mirror></TaskBtn>
        <TaskBtn $line="#76b9ed" $lineInset={6}><ExplorerIcon size={22} /></TaskBtn>
        <TaskBtn $w={50}><FirefoxIcon /></TaskBtn>
        <TaskBtn $w={50} $line="#76b9ed" $lineInset={5}><ChromeIcon /></TaskBtn>
        <TaskBtn $bg="#a8641e" $line="#f7760f"><OneDriveFolderIcon /></TaskBtn>
        <TaskBtn $line="#76b9ed" $lineInset={4}><OskTaskIcon /></TaskBtn>
        <TaskBtn $bg="#2c404d" $line="#76b9ed"><RunIcon size={24} /></TaskBtn>
        <Tray>
          <TraySlot $w={36}><NewsIcon /></TraySlot>
          <TraySlot $w={24} $gap={7}><ChevronUp size={18} strokeWidth={1.2} color="#e8e8e8" /></TraySlot>
          <TraySlot $w={24}><NetTrayIcon /></TraySlot>
          <TraySlot $w={24}><SoundIcon /></TraySlot>
          <TraySlot $w={62}>
            <Clock>
              <span>9:48 AM</span>
              <span>5/26/2023</span>
            </Clock>
          </TraySlot>
          <TraySlot $w={42}>
            <NotifIcon />
            <NotifBadge>1</NotifBadge>
          </TraySlot>
          <DesktopPeek><PeekLine /></DesktopPeek>
        </Tray>
      </Taskbar>

      <OskWindow>
        <OskTitle>
          <KeyboardMini />
          On-Screen Keyboard
          <OskControls>
            <WinControl><Minus size={14} strokeWidth={1} /></WinControl>
            <WinControl $w={45}>
              <svg width="11" height="11" viewBox="0 0 11 11" fill="none" stroke="#e4e4e4">
                <rect x="0.500" y="0.500" width="10" height="10" />
              </svg>
            </WinControl>
            <WinControl><X size={15} strokeWidth={1} /></WinControl>
          </OskControls>
        </OskTitle>
        <OskDisplay />
        <KeyArea>
          <MainKeys>
            {keyRows.map((row, i) => (
              <KeyRow key={i}>
                {row.map((k, j) => <KeyCap key={j} spec={k} />)}
              </KeyRow>
            ))}
          </MainKeys>
          <NavKeys>
            {navKeyRows.map(row => (
              <KeyRow key={row[0]}>
                {row.map((label, j) => (
                  <Key key={label} $w={navWidths[j]} $dim={label === 'Dock'}>{label}</Key>
                ))}
              </KeyRow>
            ))}
          </NavKeys>
        </KeyArea>
      </OskWindow>

      <PointerArrow width="15" height="23" viewBox="0 0 15 23">
        <path d="M1 1v18l4.500-4 3 7 3-1.300-3-6.700H14z" fill="#fff" stroke="#111" />
      </PointerArrow>

      <RunWindow>
        <RunTitle>
          <RunIcon size={16} />
          Run
          <RunClose><X size={16} strokeWidth={1.2} /></RunClose>
        </RunTitle>
        <RunBody>
          <RunMessage>
            <RunIcon size={29} />
            <RunText>
              Type the name of a program, folder, document, or Internet<br />
              resource, and Windows will open it for you.
            </RunText>
          </RunMessage>
          <OpenRow>
            <OpenLabel>Open:</OpenLabel>
            <Combo>
              cm<Caret />
              <ComboArrow><ChevronDown size={13} strokeWidth={1.3} /></ComboArrow>
            </Combo>
          </OpenRow>
          <Suggest>
            cmd
            <Grip width="10" height="10" viewBox="0 0 10 10" fill="#a8a8a8">
              <rect x="7" y="1" width="2" height="2" />
              <rect x="4" y="4" width="2" height="2" />
              <rect x="7" y="4" width="2" height="2" />
              <rect x="1" y="7" width="2" height="2" />
              <rect x="4" y="7" width="2" height="2" />
              <rect x="7" y="7" width="2" height="2" />
            </Grip>
          </Suggest>
        </RunBody>
        <RunFooter>
          <DialogButton $primary $w={86} $gap={8}>OK</DialogButton>
          <DialogButton $w={86} $gap={9}>Cancel</DialogButton>
          <DialogButton $w={86}>Browse...</DialogButton>
        </RunFooter>
      </RunWindow>
    </Desktop>
  );
}
